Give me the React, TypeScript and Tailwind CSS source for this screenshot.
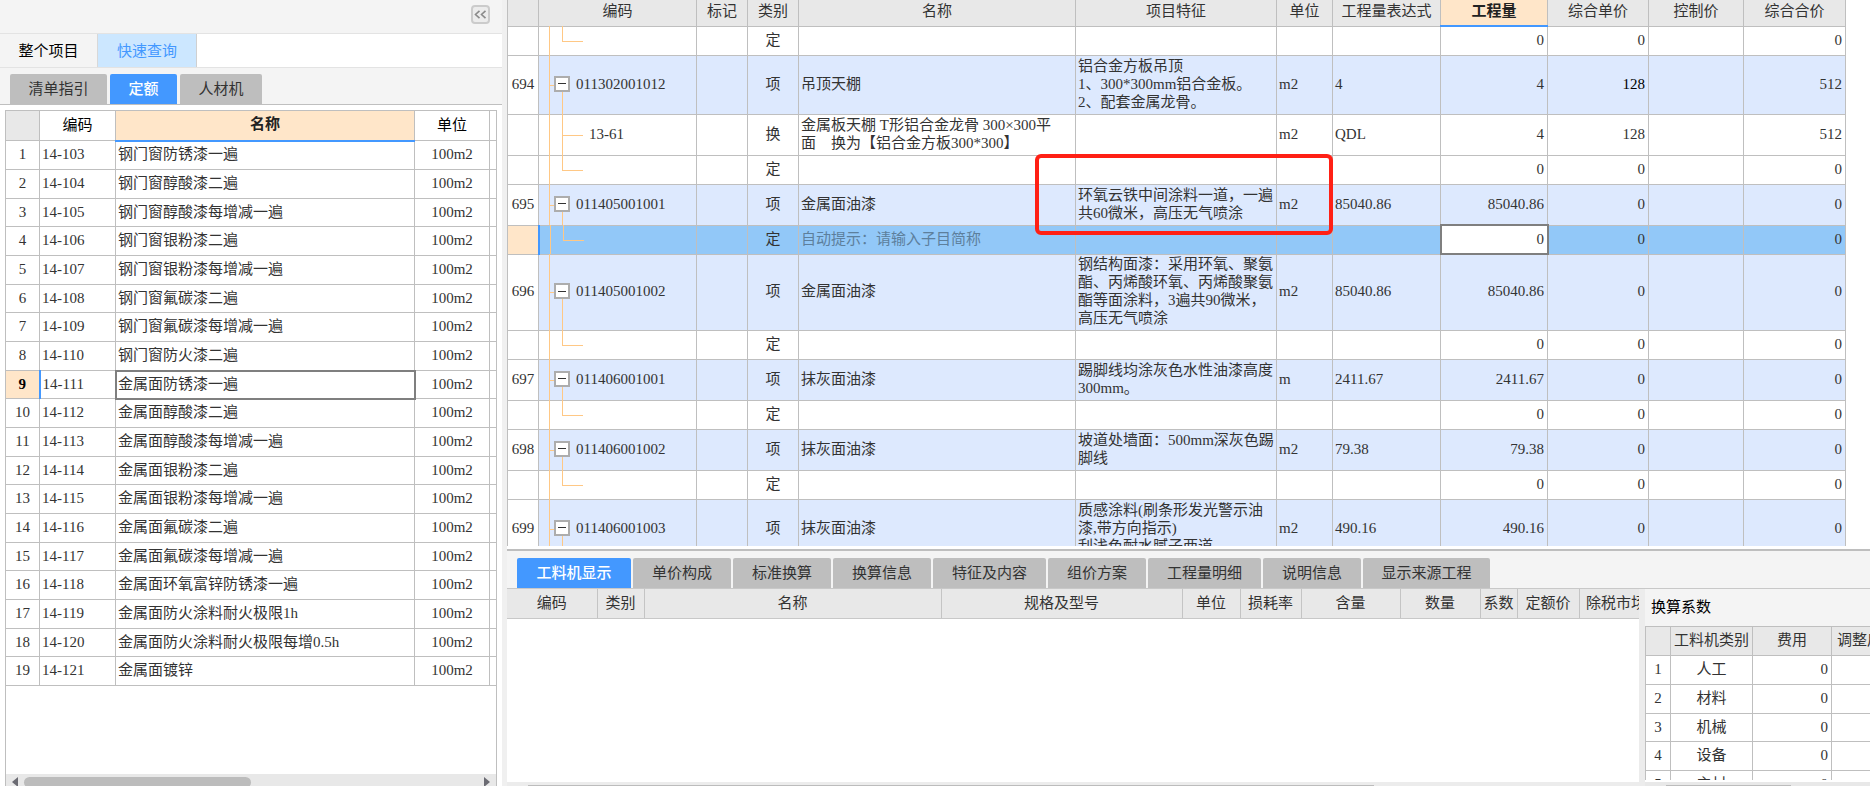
import { useState } from 'react';
import clsx from 'clsx';

type Kind = 'item' | 'sub' | 'input';

type BillRow = {
  no?: string;
  kind: Kind;
  code?: string;
  type: string;
  name?: string;
  feature?: string;
  unit?: string;
  expr?: string;
  qty: string;
  price: string;
  total: string;
  height: string;
  last?: boolean;
};

const QUOTAS = [
  '钢门窗防锈漆一遍',
  '钢门窗醇酸漆二遍',
  '钢门窗醇酸漆每增减一遍',
  '钢门窗银粉漆二遍',
  '钢门窗银粉漆每增减一遍',
  '钢门窗氟碳漆二遍',
  '钢门窗氟碳漆每增减一遍',
  '钢门窗防火漆二遍',
  '金属面防锈漆一遍',
  '金属面醇酸漆二遍',
  '金属面醇酸漆每增减一遍',
  '金属面银粉漆二遍',
  '金属面银粉漆每增减一遍',
  '金属面氟碳漆二遍',
  '金属面氟碳漆每增减一遍',
  '金属面环氧富锌防锈漆一遍',
  '金属面防火涂料耐火极限1h',
  '金属面防火涂料耐火极限每增0.5h',
  '金属面镀锌',
];

const EMPTY: BillRow = { kind: 'sub', type: '定', qty: '0', price: '0', total: '0', height: 'h-[29px]', last: true };

const BILL: BillRow[] = [
  EMPTY,
  {
    no: '694', kind: 'item', code: '011302001012', type: '项', name: '吊顶天棚',
    feature: '铝合金方板吊顶\n1、300*300mm铝合金板。\n2、配套金属龙骨。',
    unit: 'm2', expr: '4', qty: '4', price: '128', total: '512', height: 'h-[59px]',
  },
  {
    kind: 'sub', code: '13-61', type: '换',
    name: '金属板天棚 T形铝合金龙骨 300×300平\n面　换为【铝合金方板300*300】',
    unit: 'm2', expr: 'QDL', qty: '4', price: '128', total: '512', height: 'h-[41px]',
  },
  EMPTY,
  {
    no: '695', kind: 'item', code: '011405001001', type: '项', name: '金属面油漆',
    feature: '环氧云铁中间涂料一道，一遍\n共60微米，高压无气喷涂',
    unit: 'm2', expr: '85040.86', qty: '85040.86', price: '0', total: '0', height: 'h-[41px]',
  },
  { ...EMPTY, kind: 'input' },
  {
    no: '696', kind: 'item', code: '011405001002', type: '项', name: '金属面油漆',
    feature: '钢结构面漆：采用环氧、聚氨\n酯、丙烯酸环氧、丙烯酸聚氨\n酯等面涂料，3遍共90微米，\n高压无气喷涂',
    unit: 'm2', expr: '85040.86', qty: '85040.86', price: '0', total: '0', height: 'h-[76px]',
  },
  EMPTY,
  {
    no: '697', kind: 'item', code: '011406001001', type: '项', name: '抹灰面油漆',
    feature: '踢脚线均涂灰色水性油漆高度\n300mm。',
    unit: 'm', expr: '2411.67', qty: '2411.67', price: '0', total: '0', height: 'h-[41px]',
  },
  EMPTY,
  {
    no: '698', kind: 'item', code: '011406001002', type: '项', name: '抹灰面油漆',
    feature: '坡道处墙面：500mm深灰色踢\n脚线',
    unit: 'm2', expr: '79.38', qty: '79.38', price: '0', total: '0', height: 'h-[41px]',
  },
  EMPTY,
  {
    no: '699', kind: 'item', code: '011406001003', type: '项', name: '抹灰面油漆',
    feature: '质感涂料(刷条形发光警示油\n漆,带方向指示)\n刮浅色耐水腻子两道',
    unit: 'm2', expr: '490.16', qty: '490.16', price: '0', total: '0', height: 'h-[59px]',
  },
];

const BILL_COLS = [
  { label: '', width: 'w-[31px]' },
  { label: '编码', width: 'w-[158px]' },
  { label: '标记', width: 'w-[51px]' },
  { label: '类别', width: 'w-[51px]' },
  { label: '名称', width: 'w-[277px]' },
  { label: '项目特征', width: 'w-[201px]' },
  { label: '单位', width: 'w-[56px]' },
  { label: '工程量表达式', width: 'w-[108px]' },
  { label: '工程量', width: 'w-[107px]', active: true },
  { label: '综合单价', width: 'w-[101px]' },
  { label: '控制价', width: 'w-[95px]' },
  { label: '综合合价', width: 'w-[102px]' },
];

const DETAIL_TABS = [
  { label: '工料机显示', width: 'w-[114px]' },
  { label: '单价构成', width: 'w-[98px]' },
  { label: '标准换算', width: 'w-[98px]' },
  { label: '换算信息', width: 'w-[98px]' },
  { label: '特征及内容', width: 'w-[113px]' },
  { label: '组价方案', width: 'w-[98px]' },
  { label: '工程量明细', width: 'w-[113px]' },
  { label: '说明信息', width: 'w-[98px]' },
  { label: '显示来源工程', width: 'w-[127px]' },
];

const DETAIL_COLS = [
  { label: '编码', width: 'w-[90px]' },
  { label: '类别', width: 'w-[47px]' },
  { label: '名称', width: 'w-[297px]' },
  { label: '规格及型号', width: 'w-[241px]' },
  { label: '单位', width: 'w-[58px]' },
  { label: '损耗率', width: 'w-[61px]' },
  { label: '含量', width: 'w-[99px]' },
  { label: '数量', width: 'w-[80px]' },
  { label: '系数', width: 'w-[37px]' },
  { label: '定额价', width: 'w-[62px]' },
  { label: '除税市场价', width: 'w-[89px]' },
];

const CELL = 'border border-[#bfbfbf] px-0 pt-0 pb-[2px]';

function Tab({ label, width, active, onClick }: { label: string; width: string; active: boolean; onClick: () => void }) {
  return (
    <button
      type="button"
      role="tab"
      aria-selected={active}
      onClick={onClick}
      className={clsx(
        'h-[30px] shrink-0 rounded-t-xs',
        width,
        active ? 'bg-[#4398ff] font-medium text-white' : 'bg-[#bebebe]',
      )}
    >
      {label}
    </button>
  );
}

function QuotaPanel() {
  const [tab, setTab] = useState('定额');

  return (
    <aside className="flex w-[502px] shrink-0 flex-col bg-[#f4f4f4]">
      <div className="flex h-[33px] items-start justify-end pt-[5px] pr-3">
        <button
          type="button"
          aria-label="收起"
          className="flex size-[19px] items-center justify-center rounded-sm border-2 border-[#cbcbcb] bg-[#ececec]"
        >
          <svg width="13" height="9" viewBox="0 0 13 9" fill="none" stroke="#8a8a8a" strokeWidth="1.6">
            <path d="M5.5 0.8 1.5 4.5l4 3.7M11.5 0.8 7.5 4.5l4 3.7" />
          </svg>
        </button>
      </div>

      {/* Scope */}
      <div className="flex h-[35px] border-y border-[#e3e3e3] bg-white">
        <button type="button" className="w-[98px] border-r border-[#d8d8d8] bg-[#f4f4f4] text-black">整个项目</button>
        <button type="button" className="w-[99px] border-r border-[#d0d0d0] bg-[#cce7ff] text-[#4398ff]">快速查询</button>
      </div>

      {/* Library tabs */}
      <div role="tablist" className="flex h-[37px] items-end gap-[3px] border-b border-[#bfbfbf] pl-[10px]">
        <Tab label="清单指引" width="w-[97px]" active={tab === '清单指引'} onClick={() => setTab('清单指引')} />
        <Tab label="定额" width="w-[67px]" active={tab === '定额'} onClick={() => setTab('定额')} />
        <Tab label="人材机" width="w-[82px]" active={tab === '人材机'} onClick={() => setTab('人材机')} />
      </div>

      <div className="flex min-h-0 flex-1 flex-col bg-white px-[5px] pt-[5px]">
        <div className="flex min-h-0 flex-1 flex-col border-x border-[#bfbfbf]">
          <div className="-mx-px min-h-0 flex-1 overflow-hidden">
            <table className="w-full table-fixed border-collapse">
              <thead>
                <tr className="h-[30px] text-black">
                  <th className={clsx(CELL, 'w-[34px] bg-[#e8e8e8]')} />
                  <th className={clsx(CELL, 'w-[76px] font-normal')}>编码</th>
                  <th className={clsx(CELL, 'w-[299px] border-b-2 border-b-[#4398ff] bg-[#ffe6c9] font-bold text-[#222]')}>名称</th>
                  <th className={clsx(CELL, 'w-[75px] font-normal')}>单位</th>
                  <th className={clsx(CELL, 'w-[7px]')} />
                </tr>
              </thead>
              <tbody>
                {QUOTAS.map((name, i) => {
                  const selected = i === 8;
                  return (
                    <tr key={name} className="h-[29px] nth-[3n]:h-7">
                      <td
                        className={clsx(
                          CELL,
                          'text-center',
                          selected && 'border-r-2 border-r-[#4398ff] bg-[#ffe6c9] font-bold text-black',
                        )}
                      >
                        {i + 1}
                      </td>
                      <td className={clsx(CELL, 'pl-[2px]')}>14-{103 + i}</td>
                      <td className={clsx(CELL, 'pl-[2px]', selected && 'outline-2 -outline-offset-1 outline-[#7f7f7f]')}>{name}</td>
                      <td className={clsx(CELL, 'text-center')}>100m2</td>
                      <td className={CELL} />
                    </tr>
                  );
                })}
              </tbody>
            </table>
          </div>

          {/* Scroll bar */}
          <div className="h-3 overflow-hidden bg-[#e8e8e8]">
            <div className="flex h-4 items-center px-[6px]">
              <svg width="6" height="10" viewBox="0 0 6 10" fill="#6b6b73"><path d="M6 0v10L0 5z" /></svg>
              <div className="ml-[6px] h-[11px] w-[227px] rounded-full bg-[#bcbcbc]" />
              <svg className="ml-auto" width="6" height="10" viewBox="0 0 6 10" fill="#6b6b73"><path d="M0 0v10l6-5z" /></svg>
            </div>
          </div>
        </div>
      </div>
    </aside>
  );
}

function TreeCell({ row }: { row: BillRow }) {
  return (
    <td className={clsx(CELL, 'relative')}>
      <span className="absolute -top-px bottom-0 left-[10px] w-px bg-[#ffc885]" />
      {row.kind === 'item' ? (
        <>
          <span className="absolute top-1/2 left-[10px] h-px w-[6px] bg-[#ffc885]" />
          <span className="absolute top-1/2 bottom-0 left-[23px] w-px bg-[#ffc885]" />
          <div className="relative flex items-center gap-[6px] pl-[15px]">
            <button
              type="button"
              aria-label={`折叠 ${row.code}`}
              className="flex size-4 items-center justify-center border-2 border-[#adadad] bg-white"
            >
              <span className="h-px w-2 bg-[#333]" />
            </button>
            {row.code}
          </div>
        </>
      ) : (
        <>
          <span className={clsx('absolute -top-px left-[23px] w-px bg-[#ffc885]', row.last ? 'bottom-1/2' : 'bottom-0')} />
          <span className="absolute top-1/2 left-[23px] h-px w-[21px] bg-[#ffc885]" />
          <div className="pl-[50px]">{row.code}</div>
        </>
      )}
    </td>
  );
}

function BillTable() {
  return (
    <section className="relative min-h-0 flex-1 bg-white pb-[3px]">
      <div className="h-full overflow-hidden pr-6">
        <table className="w-full table-fixed border-collapse">
          <thead>
            <tr className="h-[26px] bg-[#e8e8e8]">
              {BILL_COLS.map((c) => (
                <th
                  key={c.label}
                  className={clsx(
                    'border-x border-b border-[#bfbfbf] p-0 pb-[3px]',
                    c.width,
                    c.active ? 'border-b-2 border-b-[#4398ff] bg-[#ffe6c9] font-bold text-[#222]' : 'font-normal',
                  )}
                >
                  {c.label}
                </th>
              ))}
            </tr>
          </thead>
          <tbody>
            {BILL.map((row, i) => {
              const input = row.kind === 'input';
              return (
                <tr
                  key={i}
                  className={clsx(row.height, row.kind === 'item' && 'bg-[#dde9fe]', input && 'bg-[#92c8f8]')}
                >
                  <td
                    className={clsx(
                      CELL,
                      'text-center',
                      input ? 'border-r-2 border-r-[#4398ff] bg-[#ffe6c9]' : 'bg-white',
                    )}
                  >
                    {row.no}
                  </td>
                  <TreeCell row={row} />
                  <td className={CELL} />
                  <td className={clsx(CELL, 'text-center')}>{row.type}</td>
                  <td className={clsx(CELL, 'pl-[2px] whitespace-pre')}>
                    {input ? (
                      <input
                        aria-label="子目简称"
                        placeholder="自动提示：请输入子目简称"
                        className="block h-[18px] w-full bg-transparent placeholder:text-[#5d7f9c] focus:outline-none"
                      />
                    ) : (
                      row.name
                    )}
                  </td>
                  <td className={clsx(CELL, 'pl-[2px] whitespace-pre')}>{row.feature}</td>
                  <td className={clsx(CELL, 'pl-[2px]')}>{row.unit}</td>
                  <td className={clsx(CELL, 'pl-[2px]')}>{row.expr}</td>
                  <td
                    className={clsx(
                      CELL,
                      'pr-[3px] text-right',
                      input && 'bg-white outline-2 -outline-offset-1 outline-[#7f7f7f]',
                    )}
                  >
                    {row.qty}
                  </td>
                  <td className={clsx(CELL, 'pr-[3px] text-right', row.no === '694' && 'text-black')}>{row.price}</td>
                  <td className={CELL} />
                  <td className={clsx(CELL, 'pr-[3px] text-right')}>{row.total}</td>
                </tr>
              );
            })}
          </tbody>
        </table>
      </div>

      {/* Annotation frame around the feature text of 695 */}
      <div className="pointer-events-none absolute top-[154px] left-[528px] h-[81px] w-[298px] rounded-md border-4 border-[#ff2015]" />
    </section>
  );
}

function FactorPanel() {
  return (
    <div className="flex w-[225px] shrink-0 flex-col bg-[#f4f4f4]">
      <h2 className="h-[37px] pt-[9px] pl-[6px] text-black">换算系数</h2>
      <div className="min-h-0 flex-1 overflow-hidden bg-white">
        <table className="w-[273px] table-fixed border-collapse">
          <thead>
            <tr className="h-[29px] bg-[#e8e8e8]">
              <th className={clsx(CELL, 'w-[25px]')} />
              <th className={clsx(CELL, 'w-[82px] font-normal')}>工料机类别</th>
              <th className={clsx(CELL, 'w-[79px] font-normal')}>费用</th>
              <th className={clsx(CELL, 'w-[86px] font-normal')}>调整后费用</th>
            </tr>
          </thead>
          <tbody>
            {['人工', '材料', '机械', '设备', '主材'].map((name, i) => (
              <tr key={name} className="h-[29px] nth-[3n]:h-7">
                <td className={clsx(CELL, 'text-center')}>{i + 1}</td>
                <td className={clsx(CELL, 'text-center')}>{name}</td>
                <td className={clsx(CELL, 'pr-[3px] text-right')}>0</td>
                <td className={CELL} />
              </tr>
            ))}
          </tbody>
        </table>
      </div>
      <div className="flex h-[6px] items-end border-t-2 border-white bg-[#e8e8e8] pl-[21px]">
        <div className="h-px w-[125px] bg-[#bcbcbc]" />
      </div>
    </div>
  );
}

function DetailPane() {
  const [tab, setTab] = useState('工料机显示');

  return (
    <section className="flex h-[237px] shrink-0 flex-col border-t-2 border-[#bebebe] bg-[#f4f4f4]">
      <div role="tablist" className="flex h-[38px] shrink-0 items-end gap-[2px] border-b border-[#c8c8c8] pl-[10px]">
        {DETAIL_TABS.map((t) => (
          <Tab key={t.label} label={t.label} width={t.width} active={tab === t.label} onClick={() => setTab(t.label)} />
        ))}
      </div>

      <div className="flex min-h-0 flex-1">
        <div className="flex min-w-0 flex-1 flex-col bg-white">
          <div className="min-h-0 flex-1 overflow-hidden">
            <table className="w-[1161px] table-fixed border-collapse">
              <thead>
                <tr className="h-[29px] bg-[#e8e8e8]">
                  {DETAIL_COLS.map((c) => (
                    <th
                      key={c.label}
                      className={clsx('border-r border-b border-r-[#c4c4c4] border-b-[#c8c8c8] p-0 pb-px font-normal', c.width)}
                    >
                      {c.label}
                    </th>
                  ))}
                </tr>
              </thead>
            </table>
          </div>
          <div className="flex h-1 items-end bg-[#ececec] pr-[265px] pl-[21px]">
            <div className="h-px flex-1 bg-[#bcbcbc]" />
          </div>
        </div>
        <div className="w-[6px] shrink-0 bg-[#ececec]" />
        <FactorPanel />
      </div>
    </section>
  );
}

export default function App() {
  return (
    <div className="flex h-screen overflow-hidden bg-white font-['Liberation_Serif','Noto_Sans_CJK_SC',sans-serif] text-[15px] leading-[18px] text-[#333]">
      <QuotaPanel />
      <div className="w-[5px] shrink-0 bg-[#f0f0f0]" />
      <main className="flex min-w-0 flex-1 flex-col">
        <BillTable />
        <DetailPane />
      </main>
    </div>
  );
}
